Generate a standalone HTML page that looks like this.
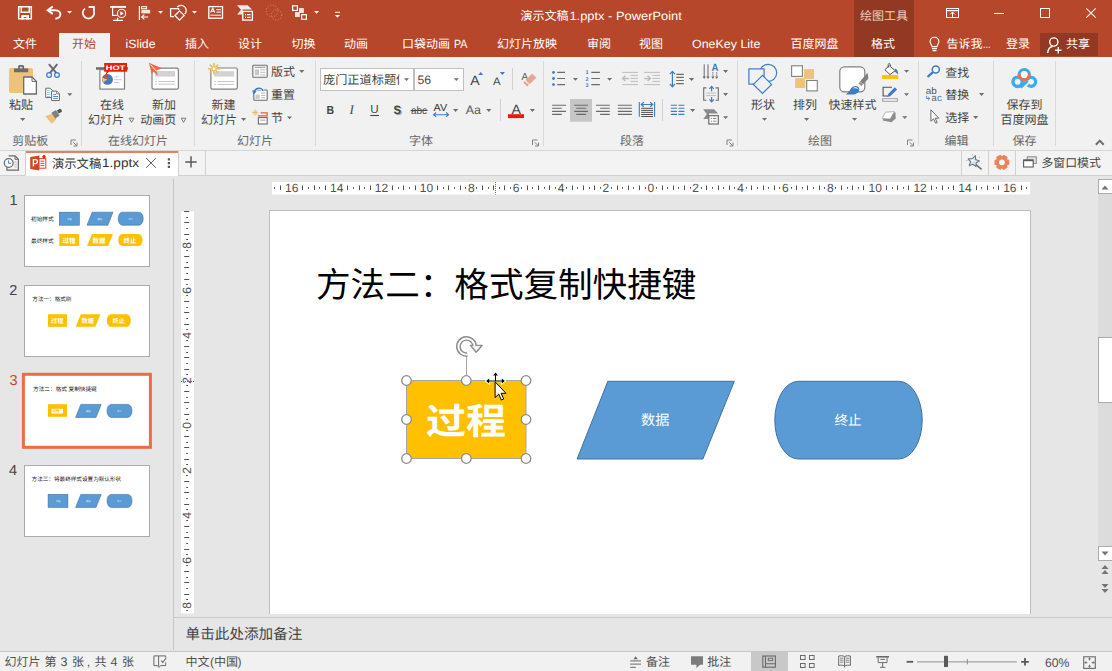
<!DOCTYPE html>
<html lang="zh-CN"><head><meta charset="utf-8"><title>演示文稿1.pptx - PowerPoint</title>
<style>
html,body{margin:0;padding:0;background:#E6E6E6;}
body{width:1112px;height:671px;overflow:hidden;font-family:"Liberation Sans","Noto Sans CJK SC",sans-serif;}
#app{position:relative;width:1112px;height:671px;overflow:hidden;}
#bg div{position:absolute;}
#ov{position:absolute;left:0;top:0;}
#ov text{font-family:"Liberation Sans","Noto Sans CJK SC",sans-serif;text-rendering:geometricPrecision;}
</style></head>
<body>
<div id="app">
<div id="bg">
<div style="left:0px;top:0px;width:1112px;height:57px;background:#B7472A;"></div>
<div style="left:854px;top:0px;width:60px;height:57px;background:#933923;"></div>
<div style="left:59px;top:33px;width:51px;height:24px;background:#F1F1F1;"></div>
<div style="left:1040px;top:33px;width:58px;height:23px;background:#933923;"></div>
<div style="left:0px;top:57px;width:1112px;height:93px;background:#F1F1F1;"></div>
<div style="left:0px;top:150px;width:1112px;height:1px;background:#D6D6D6;"></div>
<div style="left:0px;top:151px;width:1112px;height:25px;background:#F3F3F3;"></div>
<div style="left:0px;top:175px;width:1112px;height:1px;background:#D0D0D0;"></div>
<div style="left:26px;top:151px;width:152px;height:25px;background:#FFFFFF;"></div>
<div style="left:26px;top:151px;width:152px;height:2px;background:#E8825C;"></div>
<div style="left:25px;top:151px;width:1px;height:24px;background:#D0D0D0;"></div>
<div style="left:178px;top:151px;width:1px;height:24px;background:#D0D0D0;"></div>
<div style="left:205px;top:151px;width:1px;height:24px;background:#D0D0D0;"></div>
<div style="left:961px;top:151px;width:1px;height:24px;background:#D0D0D0;"></div>
<div style="left:988px;top:151px;width:1px;height:24px;background:#D0D0D0;"></div>
<div style="left:1015px;top:151px;width:1px;height:24px;background:#D0D0D0;"></div>
<div style="left:0px;top:176px;width:1112px;height:475px;background:#E6E6E6;"></div>
<div style="left:173px;top:179px;width:1px;height:471px;background:#C6C6C6;"></div>
<div style="left:81px;top:61px;width:1px;height:85px;background:#D9D9D9;"></div>
<div style="left:194px;top:61px;width:1px;height:85px;background:#D9D9D9;"></div>
<div style="left:315px;top:61px;width:1px;height:85px;background:#D9D9D9;"></div>
<div style="left:543px;top:61px;width:1px;height:85px;background:#D9D9D9;"></div>
<div style="left:737px;top:61px;width:1px;height:85px;background:#D9D9D9;"></div>
<div style="left:918px;top:61px;width:1px;height:85px;background:#D9D9D9;"></div>
<div style="left:993px;top:61px;width:1px;height:85px;background:#D9D9D9;"></div>
<div style="left:1055px;top:61px;width:1px;height:85px;background:#D9D9D9;"></div>
<div style="left:512px;top:68px;width:1px;height:22px;background:#D0D0D0;"></div>
<div style="left:500px;top:99px;width:1px;height:22px;background:#D0D0D0;"></div>
<div style="left:662px;top:99px;width:1px;height:22px;background:#D0D0D0;"></div>
<div style="left:0px;top:651px;width:1112px;height:1px;background:#C6C6C6;"></div>
<div style="left:0px;top:652px;width:1112px;height:19px;background:#F1F1F1;"></div>
<div style="left:750.5px;top:652px;width:37.4px;height:19px;background:#C8C8C8;"></div>
<div style="left:174px;top:614px;width:938px;height:3.5px;background:#E6E6E6;"></div>
<div style="left:174px;top:617px;width:938px;height:1px;background:#C8C8C8;"></div>
<div style="left:174px;top:618px;width:938px;height:32px;background:#E6E6E6;"></div>
<div style="left:1098px;top:194px;width:14px;height:353px;background:#DCDCDC;"></div>
</div>
<svg id="ov" width="1112" height="671" viewBox="0 0 1112 671">
<rect x="24.5" y="195.5" width="125" height="71" fill="#fff" stroke="#ABABAB" stroke-width="1"/>
<text x="31" y="221" font-size="5.7" fill="#222">初始样式</text>
<text x="31" y="242.9" font-size="5.7" fill="#222">最终样式</text>
<rect x="59.3" y="212.2" width="20" height="13" fill="#5B9BD5" stroke="#41719C" stroke-width="0.6"/>
<path d="M92.2 212.2L113 212.2L107.8 225.2L87 225.2Z" fill="#5B9BD5" stroke="#41719C" stroke-width="0.6"/>
<path d="M122.4 212.2L139 212.2A4.2 6.5 0 0 1 139 225.2L122.4 225.2A4.2 6.5 0 0 1 122.4 212.2Z" fill="#5B9BD5" stroke="#41719C" stroke-width="0.6"/>
<text x="67" y="219.5" font-size="2.3" fill="#fff" opacity="0.8">过程</text>
<text x="97.5" y="219.5" font-size="2.3" fill="#fff" opacity="0.8">数据</text>
<text x="128.5" y="219.5" font-size="2.3" fill="#fff" opacity="0.8">终止</text>
<rect x="59.3" y="234" width="19.7" height="12" fill="#FFC000"/>
<path d="M92 234L113 234L108 246L87 246Z" fill="#FFC000"/>
<path d="M122.4 234L138.4 234A4.2 6 0 0 1 138.4 246L122.4 246A4.2 6 0 0 1 122.4 234Z" fill="#FFC000"/>
<text x="62.5" y="242.6" font-size="6.5" font-weight="bold" fill="#fff">过程</text>
<text x="92.5" y="242.6" font-size="6.5" font-weight="bold" fill="#fff">数据</text>
<text x="123.5" y="242.6" font-size="6.5" font-weight="bold" fill="#fff">终止</text>
<rect x="24.5" y="285.5" width="125" height="71" fill="#fff" stroke="#ABABAB" stroke-width="1"/>
<text x="32.3" y="300.7" font-size="5.6" fill="#222">方法一：格式刷</text>
<rect x="47.9" y="314.2" width="19.1" height="12.6" fill="#FFC000"/>
<path d="M80.8 314.2L100.4 314.2L95.4 326.8L75.8 326.8Z" fill="#FFC000"/>
<path d="M111 314.2L126.6 314.2A4.2 6.3 0 0 1 126.6 326.8L111 326.8A4.2 6.3 0 0 1 111 314.2Z" fill="#FFC000"/>
<text x="51" y="323.2" font-size="6.2" font-weight="bold" fill="#fff">过程</text>
<text x="81.5" y="323.2" font-size="6.2" font-weight="bold" fill="#fff">数据</text>
<text x="112.5" y="323.2" font-size="6.2" font-weight="bold" fill="#fff">终止</text>
<rect x="23.4" y="374.3" width="127" height="73" fill="#fff" stroke="#EE6B48" stroke-width="3"/>
<text x="33.1" y="390.7" font-size="5.65" fill="#222">方法二：格式 复制快捷键</text>
<rect x="47.9" y="404.2" width="19.1" height="12.6" fill="#FFC000"/>
<rect x="51.5" y="408.8" width="11.5" height="4.7" fill="#fff"/>
<text x="52.5" y="412.2" font-size="3.5" font-weight="bold" fill="#FFC000">过程</text>
<path d="M80.8 404.4L101.2 404.4L96 417.4L75.6 417.4Z" fill="#5B9BD5" stroke="#41719C" stroke-width="0.6"/>
<path d="M111.2 404.4L127.8 404.4A4.2 6.5 0 0 1 127.8 417.4L111.2 417.4A4.2 6.5 0 0 1 111.2 404.4Z" fill="#5B9BD5" stroke="#41719C" stroke-width="0.6"/>
<text x="86" y="411.7" font-size="2.3" fill="#fff" opacity="0.8">数据</text>
<text x="117.3" y="411.7" font-size="2.3" fill="#fff" opacity="0.8">终止</text>
<rect x="24.5" y="465.5" width="125" height="71" fill="#fff" stroke="#ABABAB" stroke-width="1"/>
<text x="31.6" y="480.7" font-size="5.6" fill="#222">方法三：将最终样式设置为默认形状</text>
<rect x="48.1" y="494.4" width="19.8" height="13" fill="#5B9BD5" stroke="#41719C" stroke-width="0.6"/>
<path d="M80.8 494.4L101.2 494.4L96 507.4L75.6 507.4Z" fill="#5B9BD5" stroke="#41719C" stroke-width="0.6"/>
<path d="M111.2 494.4L127.8 494.4A4.2 6.5 0 0 1 127.8 507.4L111.2 507.4A4.2 6.5 0 0 1 111.2 494.4Z" fill="#5B9BD5" stroke="#41719C" stroke-width="0.6"/>
<text x="55.8" y="501.7" font-size="2.3" fill="#fff" opacity="0.8">过程</text>
<text x="86" y="501.7" font-size="2.3" fill="#fff" opacity="0.8">数据</text>
<text x="117.3" y="501.7" font-size="2.3" fill="#fff" opacity="0.8">终止</text>
<rect x="270" y="211" width="760" height="403" fill="#fff"/>
<path d="M269.5 614V210.5H1030.5V614" fill="none" stroke="#BDBDBD" stroke-width="1"/>
<rect x="272" y="182" width="758" height="12.5" fill="#fff"/>
<rect x="181" y="211.5" width="13" height="402" fill="#fff"/>
<path d="M274.5 187v1.8M280.5 185.5v4.6M302.5 185.5v4.6M308.5 187v1.8M314.5 185.5v4.6M319.5 187v1.8M325.5 185.5v4.6M347.5 185.5v4.6M353.5 187v1.8M359.5 185.5v4.6M364.5 187v1.8M370.5 185.5v4.6M392.5 185.5v4.6M398.5 187v1.8M403.5 185.5v4.6M409.5 187v1.8M415.5 185.5v4.6M437.5 185.5v4.6M443.5 187v1.8M448.5 185.5v4.6M454.5 187v1.8M460.5 185.5v4.6M465.5 187v1.8M476.5 187v1.8M482.5 185.5v4.6M488.5 187v1.8M493.5 185.5v4.6M499.5 187v1.8M504.5 185.5v4.6M510.5 187v1.8M521.5 187v1.8M527.5 185.5v4.6M532.5 187v1.8M538.5 185.5v4.6M544.5 187v1.8M549.5 185.5v4.6M555.5 187v1.8M566.5 187v1.8M572.5 185.5v4.6M577.5 187v1.8M583.5 185.5v4.6M589.5 187v1.8M594.5 185.5v4.6M600.5 187v1.8M611.5 187v1.8M617.5 185.5v4.6M622.5 187v1.8M628.5 185.5v4.6M633.5 187v1.8M639.5 185.5v4.6M645.5 187v1.8M656.5 187v1.8M662.5 185.5v4.6M667.5 187v1.8M673.5 185.5v4.6M678.5 187v1.8M684.5 185.5v4.6M690.5 187v1.8M701.5 187v1.8M706.5 185.5v4.6M712.5 187v1.8M718.5 185.5v4.6M723.5 187v1.8M729.5 185.5v4.6M734.5 187v1.8M746.5 187v1.8M751.5 185.5v4.6M757.5 187v1.8M763.5 185.5v4.6M768.5 187v1.8M774.5 185.5v4.6M779.5 187v1.8M791.5 187v1.8M796.5 185.5v4.6M802.5 187v1.8M807.5 185.5v4.6M813.5 187v1.8M819.5 185.5v4.6M824.5 187v1.8M835.5 187v1.8M841.5 185.5v4.6M847.5 187v1.8M852.5 185.5v4.6M858.5 187v1.8M863.5 185.5v4.6M886.5 185.5v4.6M892.5 187v1.8M897.5 185.5v4.6M903.5 187v1.8M908.5 185.5v4.6M931.5 185.5v4.6M936.5 187v1.8M942.5 185.5v4.6M948.5 187v1.8M953.5 185.5v4.6M976.5 185.5v4.6M981.5 187v1.8M987.5 185.5v4.6M993.5 187v1.8M998.5 185.5v4.6M1021.5 185.5v4.6M1026.5 187v1.8" stroke="#505050" stroke-width="1" fill="none"/>
<text x="291.76" y="192" font-size="12" fill="#505050" text-anchor="middle">16</text>
<text x="336.64" y="192" font-size="12" fill="#505050" text-anchor="middle">14</text>
<text x="381.52" y="192" font-size="12" fill="#505050" text-anchor="middle">12</text>
<text x="426.4" y="192" font-size="12" fill="#505050" text-anchor="middle">10</text>
<text x="471.28" y="192" font-size="12" fill="#505050" text-anchor="middle">8</text>
<text x="516.16" y="192" font-size="12" fill="#505050" text-anchor="middle">6</text>
<text x="561.04" y="192" font-size="12" fill="#505050" text-anchor="middle">4</text>
<text x="605.92" y="192" font-size="12" fill="#505050" text-anchor="middle">2</text>
<text x="650.8" y="192" font-size="12" fill="#505050" text-anchor="middle">0</text>
<text x="695.68" y="192" font-size="12" fill="#505050" text-anchor="middle">2</text>
<text x="740.56" y="192" font-size="12" fill="#505050" text-anchor="middle">4</text>
<text x="785.44" y="192" font-size="12" fill="#505050" text-anchor="middle">6</text>
<text x="830.32" y="192" font-size="12" fill="#505050" text-anchor="middle">8</text>
<text x="875.2" y="192" font-size="12" fill="#505050" text-anchor="middle">10</text>
<text x="920.08" y="192" font-size="12" fill="#505050" text-anchor="middle">12</text>
<text x="964.96" y="192" font-size="12" fill="#505050" text-anchor="middle">14</text>
<text x="1009.84" y="192" font-size="12" fill="#505050" text-anchor="middle">16</text>
<path d="M184.2 211.5h5M186.2 217.5h1.8M184.2 222.5h5M186.2 228.5h1.8M184.2 234.5h5M186.2 239.5h1.8M186.2 250.5h1.8M184.2 256.5h5M186.2 262.5h1.8M184.2 267.5h5M186.2 273.5h1.8M184.2 279.5h5M186.2 284.5h1.8M186.2 295.5h1.8M184.2 301.5h5M186.2 307.5h1.8M184.2 312.5h5M186.2 318.5h1.8M184.2 324.5h5M186.2 329.5h1.8M186.2 340.5h1.8M184.2 346.5h5M186.2 352.5h1.8M184.2 357.5h5M186.2 363.5h1.8M184.2 369.5h5M186.2 374.5h1.8M186.2 385.5h1.8M184.2 391.5h5M186.2 397.5h1.8M184.2 402.5h5M186.2 408.5h1.8M184.2 414.5h5M186.2 419.5h1.8M186.2 430.5h1.8M184.2 436.5h5M186.2 442.5h1.8M184.2 447.5h5M186.2 453.5h1.8M184.2 459.5h5M186.2 464.5h1.8M186.2 475.5h1.8M184.2 481.5h5M186.2 487.5h1.8M184.2 492.5h5M186.2 498.5h1.8M184.2 504.5h5M186.2 509.5h1.8M186.2 520.5h1.8M184.2 526.5h5M186.2 532.5h1.8M184.2 537.5h5M186.2 543.5h1.8M184.2 549.5h5M186.2 554.5h1.8M186.2 565.5h1.8M184.2 571.5h5M186.2 577.5h1.8M184.2 582.5h5M186.2 588.5h1.8M184.2 594.5h5M186.2 599.5h1.8M186.2 610.5h1.8" stroke="#505050" stroke-width="1" fill="none"/>
<text transform="translate(191 245.3) rotate(-90)" font-size="12" fill="#505050" text-anchor="middle">8</text>
<text transform="translate(191 290.3) rotate(-90)" font-size="12" fill="#505050" text-anchor="middle">6</text>
<text transform="translate(191 335.3) rotate(-90)" font-size="12" fill="#505050" text-anchor="middle">4</text>
<text transform="translate(191 380.3) rotate(-90)" font-size="12" fill="#505050" text-anchor="middle">2</text>
<text transform="translate(191 425.3) rotate(-90)" font-size="12" fill="#505050" text-anchor="middle">0</text>
<text transform="translate(191 470.3) rotate(-90)" font-size="12" fill="#505050" text-anchor="middle">2</text>
<text transform="translate(191 515.3) rotate(-90)" font-size="12" fill="#505050" text-anchor="middle">4</text>
<text transform="translate(191 560.3) rotate(-90)" font-size="12" fill="#505050" text-anchor="middle">6</text>
<text transform="translate(191 605.3) rotate(-90)" font-size="12" fill="#505050" text-anchor="middle">8</text>
<text x="316" y="296.5" font-size="34.6" fill="#000">方法二：格式复制快捷键</text>
<path d="M607.8 381.3L734.3 381.3L702.9 459L577.1 459Z" fill="#5B9BD5" stroke="#41719C" stroke-width="1"/>
<text x="641" y="425" font-size="14.2" fill="#fff">数据</text>
<path d="M798.3 381.3L898.7 381.3A23.5 38.85 0 0 1 898.7 459L798.3 459A23.5 38.85 0 0 1 798.3 381.3Z" fill="#5B9BD5" stroke="#41719C" stroke-width="1"/>
<text x="834.4" y="425" font-size="13.5" fill="#fff">终止</text>
<rect x="406.5" y="380.5" width="119.5" height="78" fill="#FFC000"/>
<text x="426" y="433.5" font-size="36" font-weight="bold" fill="#fff" textLength="80" lengthAdjust="spacingAndGlyphs">过程</text>
<rect x="406.5" y="380.5" width="119.5" height="78" fill="none" stroke="#A6A6A6" stroke-width="1"/>
<path d="M466.5 357V376" stroke="#A6A6A6" stroke-width="1"/>
<circle cx="406.5" cy="380.5" r="4.8" fill="#fff" stroke="#8C8C8C" stroke-width="1.3"/>
<circle cx="406.5" cy="419.5" r="4.8" fill="#fff" stroke="#8C8C8C" stroke-width="1.3"/>
<circle cx="406.5" cy="458.5" r="4.8" fill="#fff" stroke="#8C8C8C" stroke-width="1.3"/>
<circle cx="466.3" cy="380.5" r="4.8" fill="#fff" stroke="#8C8C8C" stroke-width="1.3"/>
<circle cx="466.3" cy="458.5" r="4.8" fill="#fff" stroke="#8C8C8C" stroke-width="1.3"/>
<circle cx="526" cy="380.5" r="4.8" fill="#fff" stroke="#8C8C8C" stroke-width="1.3"/>
<circle cx="526" cy="419.5" r="4.8" fill="#fff" stroke="#8C8C8C" stroke-width="1.3"/>
<circle cx="526" cy="458.5" r="4.8" fill="#fff" stroke="#8C8C8C" stroke-width="1.3"/>
<g fill="none" stroke-linejoin="round"><path d="M467.3 354.6A8.1 8.1 0 1 1 474.6 346.3" stroke="#8C8C8C" stroke-width="4.8"/><path d="M470.4 345.4H482.2L476.2 352.2Z" fill="#8C8C8C" stroke="#8C8C8C" stroke-width="1.4"/><path d="M467.3 354.6A8.1 8.1 0 1 1 474.6 346.6" stroke="#fff" stroke-width="1.9"/><path d="M472.3 346.3H480.2L476.2 350.8Z" fill="#fff" stroke="#fff" stroke-width="0.4"/></g>
<rect x="1098.5" y="179.5" width="14" height="14" fill="#fff" stroke="#ABABAB"/><path d="M1101.5 189.5h7l-3.5 -4z" fill="#747474"/><rect x="1098.5" y="337.5" width="14" height="65" fill="#fff" stroke="#ABABAB"/><rect x="1098.5" y="546.5" width="14" height="14" fill="#fff" stroke="#ABABAB"/><path d="M1101.5 551.5h7l-3.5 4z" fill="#747474"/><path d="M1101.5 569h7l-3.5 -4zM1101.5 574h7l-3.5 -4z" fill="#747474"/><path d="M1101.5 584h7l-3.5 4zM1101.5 589h7l-3.5 4z" fill="#747474"/>
<g stroke-linejoin="miter"><path d="M495.5 374.2V381M487.6 381H503.6" fill="none" stroke="#fff" stroke-width="2.6"/><path d="M495.5 372.2L498.6 376H492.4ZM485.6 381L489.4 377.9V384.1ZM505.4 381L501.6 377.9V384.1Z" fill="#fff" stroke="#fff" stroke-width="1.2"/><path d="M495.5 374.2V381M487.6 381H503.6" fill="none" stroke="#000" stroke-width="1"/><path d="M495.5 372.6L497.9 375.6H493.1ZM486.2 381L489.2 378.6V383.4ZM504.8 381L501.8 378.6V383.4Z" fill="#000"/><path d="M495.1 381.8V397.6L498.7 394.1L501.4 400L503.7 399L501.1 393.3H506Z" fill="#fff" stroke="#000" stroke-width="1"/></g>
<path d="M495.5 182V194.5" stroke="#D9482B" stroke-width="1" stroke-dasharray="1 1" fill="none"/><path d="M181 381.5H194" stroke="#D9482B" stroke-width="1" stroke-dasharray="1 1" fill="none"/>
<g id="qat"><path d="M18.7 6.7H31.3V18.8H18.7Z" fill="none" stroke="#fff" stroke-width="1.5"/><path d="M21.2 6.7V12.3H29.2V6.7" fill="none" stroke="#fff" stroke-width="1.4"/><path d="M21.3 15H29V19.4H26.2V17H23.8V19.4H21.3Z" fill="#fff"/><path d="M52.8 6.6L47.6 10.3L52.8 13.9M48 10.3H55.2C59 10.3 60.4 12.6 60.4 14.3C60.4 16.6 58.4 18.4 55.4 18.7" fill="none" stroke="#fff" stroke-width="1.9" stroke-linejoin="miter"/><path d="M67 11H72L69.5 13.8Z" fill="#fff"/><path d="M84.9 8.6A5.6 5.6 0 1 0 93.9 11.6" fill="none" stroke="#fff" stroke-width="1.8"/><path d="M88.6 7H93.9V11.8" fill="none" stroke="#fff" stroke-width="1.8"/><path d="M110 6.9H126" stroke="#fff" stroke-width="1.9" fill="none"/><path d="M112.6 7.5V15.4H117.2M118 17.8L117 20.2M113 20.3H123" stroke="#fff" stroke-width="1.2" fill="none"/><circle cx="121.6" cy="13.4" r="4.1" fill="none" stroke="#fff" stroke-width="1.1"/><path d="M120.3 11.2L123.9 13.4L120.3 15.6Z" fill="#fff"/><path d="M139.4 6V19.9" stroke="#fff" stroke-width="1.2" fill="none"/><rect x="141.6" y="6.7" width="5" height="2" fill="none" stroke="#fff" stroke-width="1"/><rect x="141.3" y="9.8" width="8.8" height="3.6" fill="#F6E4DE"/><path d="M141.6 17H148.2M144.3 14.6L141.7 17L144.3 19.4" stroke="#fff" stroke-width="1.2" fill="none"/><path d="M158 11H163L160.5 13.8Z" fill="#fff"/><path d="M178.6 9.9V8.6H170.6V16.7H174" fill="none" stroke="#fff" stroke-width="1.3"/><path d="M177.2 7.2A5.1 5.1 0 1 1 184.7 14.1" fill="none" stroke="#fff" stroke-width="1.2"/><path d="M179.5 10.9L184.2 15.4L179.5 20.1L174.9 15.5Z" fill="none" stroke="#fff" stroke-width="1.2"/><path d="M192 11H197L194.5 13.8Z" fill="#fff"/><rect x="208.8" y="6.6" width="13.7" height="11.6" fill="none" stroke="#fff" stroke-width="1.3"/><path d="M210.6 12.6L212.7 8.2L214.8 12.6M211.4 11.2H214" fill="none" stroke="#fff" stroke-width="1.1"/><path d="M216.3 9.7H221M216.3 12.1H221M210.3 15.2H221" stroke="#fff" stroke-width="1" fill="none"/><path d="M236.9 5.2H247.6L252 9.6H242.6V14.5H237.2L241 9.8Z" fill="#F4EAE6"/><rect x="242.8" y="11.4" width="9.6" height="8.7" fill="none" stroke="#fff" stroke-width="1.3"/><path d="M245 14.6H246.2M247 14.6H250.6M245 17.4H246.2M247 17.4H250.6" stroke="#fff" stroke-width="1.1" fill="none"/><circle cx="272" cy="10.9" r="5.9" fill="none" stroke="#D48D78" stroke-width="0.9" stroke-dasharray="1.2 1.6"/><circle cx="276.6" cy="14.9" r="5.2" fill="none" stroke="#D48D78" stroke-width="0.9" stroke-dasharray="1.2 1.6"/><rect x="292.6" y="5.8" width="4.8" height="4.6" fill="none" stroke="#fff" stroke-width="1.2"/><rect x="299" y="8.1" width="4.9" height="4.9" fill="#F6E4DE"/><rect x="295" y="12.1" width="4.9" height="4.9" fill="#F6E4DE"/><rect x="301.7" y="14.7" width="4.7" height="4.6" fill="none" stroke="#fff" stroke-width="1.2"/><path d="M314 11H319L316.5 13.8Z" fill="#fff"/><path d="M335 12.3H340" stroke="#fff" stroke-width="1" fill="none"/><path d="M335 15H340L337.5 17.8Z" fill="#fff"/><rect x="946.5" y="8.5" width="12" height="9" fill="none" stroke="#fff" stroke-width="1"/><path d="M946.5 10.6H958.5" fill="none" stroke="#fff" stroke-width="1.3"/><path d="M952.5 17V12.2M950.2 14.4L952.5 12L954.8 14.4" fill="none" stroke="#fff" stroke-width="1"/><path d="M994 13.5H1004" stroke="#fff" stroke-width="1" fill="none"/><rect x="1040.5" y="8.5" width="9" height="9" fill="none" stroke="#fff" stroke-width="1"/><path d="M1086.3 8.3L1095.7 17.7M1095.7 8.3L1086.3 17.7" stroke="#fff" stroke-width="1.1" fill="none"/><path d="M932 46.6C932 44.8 930.1 44 930.1 41.6A4.4 4.4 0 0 1 938.9 41.6C938.9 44 937 44.8 937 46.6Z" fill="none" stroke="#fff" stroke-width="1.1"/><path d="M932 48.6H937M932.6 50.6H936.4" stroke="#fff" stroke-width="1.1" fill="none"/><circle cx="1053.8" cy="42" r="4.1" fill="none" stroke="#fff" stroke-width="1.4"/><path d="M1047.7 53C1048 49.2 1050.2 46.9 1052.6 46.5" fill="none" stroke="#fff" stroke-width="1.4"/><path d="M1058.3 47V53.4M1055.1 50.2H1061.5" stroke="#fff" stroke-width="1.4" fill="none"/></g>
<g id="rb1"><rect x="9" y="68" width="24" height="25" rx="1.8" fill="#EDC27C"/><path d="M14 68.4H28.2V72.2H14ZM18.1 69V66.6Q18.1 65.1 19.6 65.1H22.6Q24.1 65.1 24.1 66.6V69Z" fill="#6B6B6B"/><rect x="19.9" y="66.8" width="2.4" height="1.6" fill="#E4E4E4"/><path d="M23.7 77H32L36.4 81.4V94H23.7Z" fill="#fff" stroke="#6B6B6B" stroke-width="1.3" stroke-linejoin="round"/><path d="M32 77V81.4H36.4" fill="none" stroke="#6B6B6B" stroke-width="1"/><path d="M20 118H25.4L22.7 121Z" fill="#6E6E6E"/><path d="M48.9 64.2L56.4 73.2M57.3 64.2L49.8 73.2" stroke="#6B6B6B" stroke-width="2" fill="none"/><circle cx="49.1" cy="75" r="2.4" fill="none" stroke="#3E7CC4" stroke-width="1.2"/><circle cx="57" cy="75" r="2.4" fill="none" stroke="#3E7CC4" stroke-width="1.2"/><path d="M45.7 88.2H50.2L52.4 90.4V97.6H45.7Z" fill="#fff" stroke="#6B6B6B" stroke-width="1"/><path d="M47 90.5H49.4M47 92.5H49.8M47 94.5H49.8M47 96.5H49.8" stroke="#7FA8DA" stroke-width="0.8"/><path d="M51.6 91.1H56.8L59.4 93.7V100.5H51.6Z" fill="#fff" stroke="#6B6B6B" stroke-width="1"/><path d="M56.6 91.3V93.9H59.2" fill="none" stroke="#6B6B6B" stroke-width="0.8"/><path d="M53.2 94.6H56M53.2 96.5H58M53.2 98.4H58" stroke="#3E7CC4" stroke-width="0.9"/><path d="M67.2 93.2H72.4L69.8 96.1Z" fill="#6E6E6E"/><path d="M45.2 116.3L52.4 113.6L56.2 119.4L51.8 123.8Z" fill="#EDC27C"/><path d="M51.4 112.8L56 109.9L59.6 115.5L55.3 118.7Z" fill="#808080"/><path d="M56.9 110.6L59.8 108.8Q60.6 108.4 61 109.2L61.9 110.7Q62.3 111.5 61.5 111.9L58.8 113.6Z" fill="#555"/><path d="M71 145V140H76" fill="none" stroke="#808080" stroke-width="1"/><path d="M73.3 142.3L76.5 145.5M77 142.5V146H73.5" fill="none" stroke="#808080" stroke-width="1"/><rect x="96" y="67.2" width="32" height="2.5" fill="#6B6B6B"/><rect x="99.9" y="69.7" width="24.6" height="19.4" fill="#fff" stroke="#808080" stroke-width="1.2"/><circle cx="107.5" cy="79.4" r="5.4" fill="#3E7CC4"/><path d="M107.5 79.4L103.1 82.5A5.4 5.4 0 0 1 102.4 77.6Z" fill="#EDC27C"/><path d="M107.5 79.4L102.4 77.6A5.4 5.4 0 0 1 108.6 74.1Z" fill="#B9583C"/><path d="M114.2 76.8H119M114.2 79.7H121.8M114.2 82.5H119" stroke="#C4C4C4" stroke-width="0.9"/><path d="M104.2 63H127V71.8H109L105.6 74.8L106.6 71.8H104.2Z" fill="#E71F0D"/><text x="105.8" y="69.8" font-size="6.5" fill="#fff" font-weight="bold" textLength="19.4" lengthAdjust="spacingAndGlyphs">HOT</text><path d="M129.2 118.2H133.9L131.55 122.4Z" fill="none" stroke="#6E6E6E" stroke-width="0.9"/><rect x="152" y="68.1" width="26.4" height="21" rx="1.6" fill="#fff" stroke="#808080" stroke-width="1.2"/><rect x="155.2" y="71" width="19.8" height="5.6" fill="#D2D2D2"/><path d="M155.2 81.5H156.8M158.3 81.5H175M155.2 84.2H156.8M158.3 84.2H175" stroke="#C0C0C0" stroke-width="0.9"/><path d="M148.9 62.7L162 68.3L156.6 70.4L157.8 75.8L153.6 71.8L151.6 73.8Z" fill="#EE6B48"/><path d="M150.6 64.6L156.6 71.4" stroke="#fff" stroke-width="0.9" fill="none"/><path d="M181.2 118.2H185.9L183.55 122.4Z" fill="none" stroke="#6E6E6E" stroke-width="0.9"/><rect x="210.9" y="68" width="26.4" height="21.2" rx="1.6" fill="#fff" stroke="#808080" stroke-width="1.2"/><rect x="214.2" y="71.2" width="20" height="5.4" fill="#D2D2D2"/><path d="M214.2 81.5H215.8M217.4 81.5H234.2M214.2 84.4H215.8M217.4 84.4H234.2" stroke="#C0C0C0" stroke-width="0.9"/><circle cx="214" cy="68.8" r="3.2" fill="#F1F1F1"/><path d="M214 62.8V74.8M208 68.8H220M209.8 64.6L218.2 73M218.2 64.6L209.8 73" stroke="#EDB866" stroke-width="1.5" fill="none"/><circle cx="214" cy="68.8" r="1.5" fill="#fff"/><path d="M241 118H246.2L243.6 120.9Z" fill="#6E6E6E"/><rect x="252.8" y="65.2" width="14.4" height="12" rx="0.8" fill="#fff" stroke="#6B6B6B" stroke-width="1.1"/><path d="M254.5 67.3H265.6" stroke="#808080" stroke-width="0.9"/><rect x="254.7" y="69.3" width="4.3" height="6" fill="#C8C8C8"/><path d="M260.4 69.8H265.4M260.4 72.3H265.4M260.4 74.9H265.4" stroke="#B0B0B0" stroke-width="0.9"/><path d="M299.2 70.1H304.4L301.8 73Z" fill="#6E6E6E"/><rect x="253.8" y="90" width="13.4" height="10.2" rx="0.8" fill="#fff" stroke="#6B6B6B" stroke-width="1.1"/><rect x="255.4" y="94.6" width="4.2" height="4.2" fill="#C8C8C8"/><path d="M261 93H265.4M261 95.4H265.4M261 97.8H265.4" stroke="#B0B0B0" stroke-width="0.9"/><path d="M254 92.6C254.6 89.4 257.6 87.6 260.4 88.4C261.8 88.8 262.6 89.6 263.2 90.6" fill="none" stroke="#F1F1F1" stroke-width="3.2"/><path d="M254 92.6C254.6 89.4 257.6 87.6 260.4 88.4C261.8 88.8 262.6 89.6 263.2 90.6" fill="none" stroke="#3E7CC4" stroke-width="1.5"/><path d="M252.2 90.2L256.8 91.4L253.4 94.6Z" fill="#3E7CC4"/><path d="M255.2 109.4V115.6M252.1 112.5H258.3M253 110.3L257.4 114.7M257.4 110.3L253 114.7" stroke="#EDB866" stroke-width="0.9" fill="none"/><path d="M260.6 112.8H267.2V115.8H258" fill="none" stroke="#EE5B3A" stroke-width="1.2"/><rect x="258.4" y="117.6" width="8.8" height="6.4" fill="#fff" stroke="#6B6B6B" stroke-width="1.1"/><path d="M260.2 120.2H265.6" stroke="#B0B0B0" stroke-width="1.2"/><path d="M287 116.4H292L289.5 119.2Z" fill="#6E6E6E"/></g>
<g id="rb2"><rect x="320.5" y="68.5" width="93" height="22" fill="#fff" stroke="#C0C0C0" stroke-width="1"/><rect x="414.5" y="68.5" width="49" height="22" fill="#fff" stroke="#C0C0C0" stroke-width="1"/><path d="M404 78.2H409L406.5 81Z" fill="#6E6E6E"/><path d="M453.8 78.2H458.9L456.35 81.05Z" fill="#6E6E6E"/><text x="470.2" y="84.9" font-size="13.6" fill="#444444" textLength="9.4" lengthAdjust="spacingAndGlyphs">A</text><path d="M478.2 75.1H483.2L480.7 71.9Z" fill="#3E7CC4"/><text x="493" y="84.9" font-size="10.8" fill="#444444" textLength="7.6" lengthAdjust="spacingAndGlyphs">A</text><path d="M499.8 71.9H505L502.4 75.1Z" fill="#3E7CC4"/><text x="521.6" y="79.8" font-size="10.2" fill="#5A5A5A" textLength="6.6" lengthAdjust="spacingAndGlyphs">A</text><path d="M525.9 80L532.1 73.9L536.2 77.6L529.6 84Z" fill="#E1A898" stroke="#E1A898" stroke-width="0.6" stroke-linejoin="round"/><path d="M523.2 82.5L524.7 80.9L529 85L527.2 86.5Z" fill="#E1A898"/><text x="326.6" y="113.8" font-size="11.8" fill="#444444" font-weight="bold" textLength="7.6" lengthAdjust="spacingAndGlyphs">B</text><text x="349.6" y="113.8" font-size="13" fill="#444444" font-style="italic" style="font-family:'Liberation Serif',serif">I</text><text x="370.3" y="113.4" font-size="11.6" fill="#444444">U</text><path d="M370.2 115.5H379" stroke="#444444" stroke-width="1.1"/><text x="394.8" y="115.2" font-size="12.2" fill="#ADADAD" font-weight="bold" textLength="7.6" lengthAdjust="spacingAndGlyphs">S</text><text x="393.5" y="113.9" font-size="12.2" fill="#444444" font-weight="bold" textLength="7.6" lengthAdjust="spacingAndGlyphs">S</text><text x="411" y="113.6" font-size="10.6" fill="#4A4A4A" textLength="16" lengthAdjust="spacingAndGlyphs">abc</text><path d="M410.6 110.5H427.6" stroke="#4A4A4A" stroke-width="1"/><text x="433.6" y="110.7" font-size="10.2" fill="#333" textLength="13.6" lengthAdjust="spacingAndGlyphs">AV</text><path d="M433.6 114.7H448.6M436.2 112.5L433.6 114.7L436.2 116.9M446 112.5L448.6 114.7L446 116.9" fill="none" stroke="#3E7CC4" stroke-width="1.1"/><path d="M453 109H458.2L455.6 111.9Z" fill="#6E6E6E"/><text x="465.8" y="114" font-size="12.2" fill="#5A5A5A" textLength="15.2" lengthAdjust="spacingAndGlyphs">Aa</text><path d="M486.2 109H491.4L488.8 111.9Z" fill="#6E6E6E"/><text x="511.6" y="114" font-size="13.4" fill="#444444" textLength="9.4" lengthAdjust="spacingAndGlyphs">A</text><rect x="508" y="114.2" width="16" height="3.9" fill="#E81A0C"/><path d="M529.8 109H535L532.4 111.9Z" fill="#6E6E6E"/><path d="M532.5 145V140H537.5" fill="none" stroke="#808080" stroke-width="1"/><path d="M534.8 142.3L538 145.5M538.5 142.5V146H535" fill="none" stroke="#808080" stroke-width="1"/><circle cx="553.5" cy="72.4" r="1.4" fill="#3E7CC4"/><circle cx="553.5" cy="78.5" r="1.4" fill="#3E7CC4"/><circle cx="553.5" cy="84.6" r="1.4" fill="#3E7CC4"/><path d="M557.2 72.4H565M557.2 78.5H565M557.2 84.6H565" stroke="#6B6B6B" stroke-width="1.1"/><path d="M572.9 77.9H578L575.45 80.75Z" fill="#6E6E6E"/><text x="585.6" y="74.4" font-size="5.4" fill="#3E7CC4" font-weight="bold">1</text><text x="585.6" y="80.5" font-size="5.4" fill="#3E7CC4" font-weight="bold">2</text><text x="585.6" y="86.6" font-size="5.4" fill="#3E7CC4" font-weight="bold">3</text><path d="M591.3 72.4H599.9M591.3 78.5H599.9M591.3 84.6H599.9" stroke="#6B6B6B" stroke-width="1.1"/><path d="M607.1 77.9H612.1L609.6 80.7Z" fill="#6E6E6E"/><path d="M622.2 72.4H638M630.3 75.4H638M630.3 78.4H638M630.3 81.4H638M622.2 84.6H638" stroke="#BDBDBD" stroke-width="1"/><path d="M622.6 78.4H628.8M625.4 75.8L622.6 78.4L625.4 81" fill="none" stroke="#BDBDBD" stroke-width="1.5"/><path d="M644.1 72.4H660M652.4 75.4H660M652.4 78.4H660M652.4 81.4H660M644.1 84.6H660" stroke="#BDBDBD" stroke-width="1"/><path d="M644.2 78.4H650.4M647.6 75.8L650.4 78.4L647.6 81" fill="none" stroke="#BDBDBD" stroke-width="1.5"/><path d="M672.4 71.6V86.6M669.9 74.2L672.4 71.4L674.9 74.2M669.9 84L672.4 86.8L674.9 84" fill="none" stroke="#3E7CC4" stroke-width="1.2"/><path d="M676.2 74.4H683.8M676.2 77.4H683.8M676.2 80.5H683.8M676.2 83.6H683.8" stroke="#6B6B6B" stroke-width="1.1"/><path d="M688.9 78H694.2L691.55 80.95Z" fill="#6E6E6E"/><path d="M704.2 64.3V77.5M708 64.3V77.5" stroke="#6B6B6B" stroke-width="1"/><path d="M712.9 72.2V77.5M716.7 72.2V77.5" stroke="#6B6B6B" stroke-width="1" stroke-dasharray="1.4 0.8"/><path d="M702.6 76.4H705.8L704.2 78.9ZM706.4 76.4H709.6L708 78.9ZM711.3 76.4H714.5L712.9 78.9ZM715.1 76.4H718.3L716.7 78.9Z" fill="#6B6B6B"/><text x="711.4" y="70.8" font-size="10.4" fill="#3E7CC4" font-weight="bold" textLength="7" lengthAdjust="spacingAndGlyphs">A</text><path d="M723.1 70.1H728.1L725.6 72.9Z" fill="#6E6E6E"/><path d="M706.4 87.9H703.7V100.2H706.4M715.6 87.9H718.3V100.2H715.6" fill="none" stroke="#6B6B6B" stroke-width="1.1"/><path d="M706.2 93.1H716M706.2 95.6H716" stroke="#B8B8B8" stroke-width="0.9"/><path d="M711.6 91.6V86.6M709.4 88.8L711.6 86.4L713.8 88.8M711.6 97V101.6M709.4 99.4L711.6 101.8L713.8 99.4" fill="none" stroke="#3E7CC4" stroke-width="1.2"/><path d="M723.1 93.1H728.1L725.6 95.9Z" fill="#6E6E6E"/><path d="M703 109.3H714L718.2 113.5H709V119H703.3L706.8 114Z" fill="#8A8A8A"/><rect x="708.8" y="115.7" width="9.5" height="8.3" fill="#fff" stroke="#6B6B6B" stroke-width="1.2"/><path d="M710.8 118.5H712M713 118.5H716.4M710.8 121.2H712M713 121.2H716.4" stroke="#8A8A8A" stroke-width="1"/><path d="M723.1 116.3H728.1L725.6 119.1Z" fill="#6E6E6E"/><rect x="570" y="99" width="22" height="22.7" fill="#C6C6C6"/><path d="M552.1 105.3H566M552.1 108.3H561.8M552.1 111.4H566M552.1 114.4H561.8" stroke="#6B6B6B" stroke-width="1.1"/><path d="M574.2 105.3H588M576.2 108.3H586.1M574.2 111.4H588M576.2 114.4H586.1" stroke="#6B6B6B" stroke-width="1.1"/><path d="M596 105.3H609.8M600.1 108.3H609.8M596 111.4H609.8M600.1 114.4H609.8" stroke="#6B6B6B" stroke-width="1.1"/><path d="M617.9 105.3H631.9M617.9 108.3H631.9M617.9 111.4H631.9M617.9 114.4H631.9" stroke="#6B6B6B" stroke-width="1.1"/><path d="M639.3 102.1V116.8M654.6 102.1V116.8" stroke="#3E7CC4" stroke-width="1.1"/><path d="M641.4 104.5H652.6M643.8 102.3L641.3 104.5L643.8 106.7M650.2 102.3L652.7 104.5L650.2 106.7" fill="none" stroke="#3E7CC4" stroke-width="1.2"/><path d="M641.2 108.3H653M641.2 110.4H653M641.2 112.4H653M641.2 114.5H653M641.2 116.5H653" stroke="#505050" stroke-width="1"/><path d="M670.8 105.3H677M678.4 105.3H684.4M670.8 108.3H677M678.4 108.3H684.4M670.8 111.4H677M678.4 111.4H684.4M670.8 114.4H677M678.4 114.4H684.4" stroke="#3E7CC4" stroke-width="1.1"/><path d="M690 109H695.2L692.6 111.9Z" fill="#6E6E6E"/><path d="M727 145V140H732" fill="none" stroke="#808080" stroke-width="1"/><path d="M729.3 142.3L732.5 145.5M733 142.5V146H729.5" fill="none" stroke="#808080" stroke-width="1"/><circle cx="768.2" cy="72.8" r="8.5" fill="none" stroke="#3E7CC4" stroke-width="1.2"/><rect x="748.9" y="68.9" width="15.2" height="15.2" fill="#F1F1F1" stroke="#3E7CC4" stroke-width="1.2"/><path d="M762.5 75.4L771.6 84.4L762.5 93.5L753.4 84.4Z" fill="#F1F1F1" stroke="#3E7CC4" stroke-width="1.2"/><path d="M762 118H767L764.5 120.8Z" fill="#6E6E6E"/><rect x="804" y="69.1" width="10" height="9.8" fill="#EDC27C"/><rect x="795.1" y="78.1" width="10.1" height="9.9" fill="#EDC27C"/><rect x="791.6" y="65.8" width="10.8" height="10.6" fill="#fff" stroke="#808080" stroke-width="1.1"/><rect x="806.7" y="80.5" width="10.6" height="10.4" fill="#fff" stroke="#808080" stroke-width="1.1"/><path d="M804 118H809.2L806.6 120.9Z" fill="#6E6E6E"/><rect x="839.8" y="66.8" width="25" height="25" rx="4.6" fill="#fff" stroke="#808080" stroke-width="1.2"/><path d="M867.6 72.8L868.4 78.4L863.2 84.2L860 81.6Z" fill="#808080"/><path d="M860 81.6L863.2 84.2L861.4 86.2L858.4 83.6Z" fill="#9A9A9A"/><path d="M845.6 94.4C849.6 92.2 850.4 88.2 853.2 86.6C855.6 85.4 858.4 86.2 859.2 88.4C860 91.2 857.6 93.8 853.6 94.4Z" fill="#3E7CC4"/><path d="M853.6 88.2C855.2 87.2 857 87.6 857.6 88.8" fill="none" stroke="#fff" stroke-width="1"/><path d="M852 118H857.1L854.55 120.85Z" fill="#6E6E6E"/><path d="M889.2 65.6L895.2 70.6L890 74.6L884.9 69.8Z" fill="#fff" stroke="#505050" stroke-width="1"/><path d="M888.2 67.8V64.4Q888.2 63.6 889.2 63.6Q890.4 63.6 890.4 64.6V66.4" fill="none" stroke="#505050" stroke-width="0.9"/><path d="M895.4 68.4C897.2 69.4 898.4 71.4 898 74.4C896.6 73 895.4 72 894.4 71.8Z" fill="#3E7CC4"/><rect x="882" y="75.1" width="16.2" height="3.8" fill="#FFC000"/><path d="M904 70H909.1L906.55 72.85Z" fill="#6E6E6E"/><path d="M892 87.2H883.1V96H888" fill="none" stroke="#505050" stroke-width="1.1"/><path d="M894.8 87.2L897.2 89.6L890.2 96.2L887.2 97L888.2 94Z" fill="#3E7CC4"/><rect x="882.7" y="98.8" width="14.6" height="2.4" fill="#fff" stroke="#8E8E8E" stroke-width="0.9"/><path d="M904 93.2H909.1L906.55 96.05Z" fill="#6E6E6E"/><path d="M885.6 113.6L895.4 112.2L895.8 118.4L891.4 122.2L882.6 120.4Z" fill="#8C8C8C"/><path d="M885.4 112.2L894.4 111.6L890.2 119L882.2 118.6Z" fill="#fff" stroke="#9A9A9A" stroke-width="0.7"/><path d="M902.2 116.2H907.3L904.75 119.05Z" fill="#6E6E6E"/><path d="M907.5 145V140H912.5" fill="none" stroke="#808080" stroke-width="1"/><path d="M909.8 142.3L913 145.5M913.5 142.5V146H910" fill="none" stroke="#808080" stroke-width="1"/><path d="M933 72.2L928.2 76.4" stroke="#3E7CC4" stroke-width="2.2" stroke-linecap="round"/><circle cx="935.8" cy="69.5" r="3.5" fill="#fff" stroke="#3E7CC4" stroke-width="1.6"/><text x="925.8" y="93.8" font-size="9.6" fill="#5A5A5A" textLength="11" lengthAdjust="spacingAndGlyphs">ab</text><text x="931.4" y="100.8" font-size="9.6" fill="#5A5A5A" textLength="5.2" lengthAdjust="spacingAndGlyphs">a</text><text x="937" y="100.8" font-size="9.6" fill="#3E7CC4" textLength="5" lengthAdjust="spacingAndGlyphs">c</text><path d="M926.6 95.8V98.6H929.6M928.2 97L929.8 98.6L928.2 100.2" fill="none" stroke="#3E7CC4" stroke-width="0.9"/><path d="M979 93.1H984.2L981.6 96Z" fill="#6E6E6E"/><path d="M930.9 109.8V121.2L933.6 118.8L935.6 123.2L937.2 122.5L935.2 118.2H938.8Z" fill="#fff" stroke="#6A6A6A" stroke-width="1"/><path d="M973.1 116H978.3L975.7 118.9Z" fill="#6E6E6E"/><circle cx="1017.6" cy="81.8" r="4.65" fill="none" stroke="#3EAAEE" stroke-width="3.4"/><path d="M1026.97 80.26A4.5 4.5 0 1 1 1028 85" fill="none" stroke="#3EAAEE" stroke-width="3.2"/><path d="M1020.5 87.4L1027.4 80.6" fill="none" stroke="#3EAAEE" stroke-width="3.4"/><circle cx="1024.26" cy="74.63" r="5.1" fill="#FCFCFC" stroke="#3EAAEE" stroke-width="3.1"/><path d="M1019.24 73.74A5.1 5.1 0 1 0 1029.28 73.74" fill="none" stroke="#F26B4A" stroke-width="2.7"/><path d="M1095.9 144.8L1099.8 140.6L1103.7 144.8" fill="none" stroke="#6E6E6E" stroke-width="2"/></g>
<clipPath id="fnc"><rect x="321" y="69" width="78.4" height="21"/></clipPath><g clip-path="url(#fnc)">
<text x="323" y="84.3" font-size="12.2" fill="#444444">庞门正道标题体</text>
</g>
<g id="misc"><path d="M8.6 155.9H15L18.4 159.3V170.2H6.9V166.6" fill="#F3F3F3" stroke="#6A6A6A" stroke-width="1.2"/><path d="M15 155.9V159.3H18.4" fill="none" stroke="#6A6A6A" stroke-width="1"/><path d="M14.4 162H16.8M14.4 164.4H16.8M14.4 166.8H16.8" stroke="#B4B4B4" stroke-width="0.9"/><circle cx="8.7" cy="163" r="4.4" fill="#fff" stroke="#6A6A6A" stroke-width="1.2"/><path d="M8.6 160.4V163.3H11" stroke="#3E7CC4" stroke-width="1" fill="none"/><rect x="38.8" y="158.6" width="7" height="9.6" fill="#fff" stroke="#D24625" stroke-width="1"/><path d="M40.4 161.2H44.4M40.4 163.4H44.4M40.4 165.6H44.4" stroke="#D24625" stroke-width="1"/><path d="M30.2 157.1L39.4 155.4V170.6L30.2 168.9Z" fill="#D24625"/><path d="M33.4 166.6V159.6H35.6Q37.4 159.6 37.4 161.6Q37.4 163.6 35.6 163.6H33.6" fill="none" stroke="#fff" stroke-width="1.4"/><circle cx="44" cy="156.8" r="1.7" fill="#E8200C"/><path d="M146.2 158.1L155.8 167.7M155.8 158.1L146.2 167.7" stroke="#5A5A5A" stroke-width="1" fill="none"/><path d="M167.8 158.2h2.2v2.2h-2.2zM167.8 162h2.2v2.2h-2.2zM167.8 165.8h2.2v2.2h-2.2z" fill="#5A5A5A"/><path d="M185.3 161.9H196.7M191 156.2V167.6" stroke="#5A5A5A" stroke-width="1.5" fill="none"/><path d="M975.2 164L981.6 169.4" stroke="#6E6E6E" stroke-width="1.6" fill="none"/><path d="M975.4 155.6L975.6 159.4L979.4 161L976.2 162.8L976 166.6L973 164.2L969.2 165.4L970.6 161.8L968.2 158.8L972.2 158.8Z" fill="#D4E6F5" stroke="#6F7A86" stroke-width="1.1" stroke-linejoin="round"/><circle cx="972.6" cy="160.6" r="1.1" fill="#fff"/><path d="M972.4 154.4V155.6M979 157.6L980 156.8M966.2 160.6H967.4M969.4 166.6L970.2 166" stroke="#9A9A9A" stroke-width="0.8"/><path d="M1008.7 160.4L1008.7 164.2L1006.8 164.7L1006.5 165.3L1007.0 167.3L1003.7 169.2L1002.2 167.8L1001.6 167.8L1000.1 169.2L996.8 167.3L997.3 165.3L997.0 164.7L995.1 164.2L995.1 160.4L997.0 159.9L997.3 159.3L996.8 157.3L1000.1 155.4L1001.6 156.8L1002.2 156.8L1003.7 155.4L1007.0 157.3L1006.5 159.3L1006.8 159.9Z" fill="#E8845A" stroke="#E8845A" stroke-width="1.2" stroke-linejoin="round"/><circle cx="1001.9" cy="162.3" r="2.9" fill="#F6F6F6"/><rect x="1027.3" y="156.8" width="9" height="6.6" fill="#E2E2E2" stroke="#8A8A8A" stroke-width="1"/><rect x="1023.6" y="160" width="9.6" height="7" fill="#fff" stroke="#5A5A5A" stroke-width="1.1"/><path d="M1023.6 160.4H1033.2" stroke="#5A5A5A" stroke-width="1.6"/><path d="M158.6 655.9H153.9V665.6H157.4L159 667.4L160.6 665.6H165.7V662.4M158.6 655.9V666M158.6 655.9H165.7V657.6" fill="none" stroke="#6A6A6A" stroke-width="1"/><path d="M161.2 660.6L162.8 662.4L166.2 658" fill="none" stroke="#6A6A6A" stroke-width="1.1"/><path d="M633.4 659.3L635.6 656.3L637.8 659.3Z" fill="#6A6A6A"/><path d="M630.2 660.9H641M630.2 664.1H641M630.2 667.3H635.8" stroke="#6A6A6A" stroke-width="1"/><path d="M691 656.3H703V664.7H700L696.4 667.9V664.7H691Z" fill="#7C7C7C"/><rect x="762.8" y="656" width="12.6" height="11.2" fill="none" stroke="#6A6A6A" stroke-width="1.1"/><path d="M765.5 656V667.2M765.5 663.7H775.4" fill="none" stroke="#6A6A6A" stroke-width="1.1"/><rect x="768.3" y="658.2" width="4.4" height="2.4" fill="none" stroke="#6A6A6A" stroke-width="0.9"/><rect x="800.5" y="655.5" width="4.6" height="4" fill="none" stroke="#6A6A6A" stroke-width="1"/><rect x="800.5" y="663.5" width="4.6" height="4" fill="none" stroke="#6A6A6A" stroke-width="1"/><rect x="809.5" y="655.5" width="4.6" height="4" fill="none" stroke="#6A6A6A" stroke-width="1"/><rect x="809.5" y="663.5" width="4.6" height="4" fill="none" stroke="#6A6A6A" stroke-width="1"/><path d="M844.6 656.6C843 655.6 840.6 655.6 838.7 656V665.4C840.6 665 843 665 844.6 666C846.2 665 848.6 665 850.4 665.4V656C848.6 655.6 846.2 655.6 844.6 656.6ZM844.6 656.6V667.4" fill="none" stroke="#6A6A6A" stroke-width="1"/><path d="M840 658.2H843.4M840 660.2H843.4M840 662.2H843.4M845.8 658.2H849.2M845.8 660.2H849.2M845.8 662.2H849.2" stroke="#6A6A6A" stroke-width="0.8"/><path d="M876.2 656.8H889" stroke="#6A6A6A" stroke-width="1.6"/><path d="M878.2 657.4V662.6H887V657.4M880.4 659.4H885M882.6 662.6V667M880 667.3H885.3" fill="none" stroke="#6A6A6A" stroke-width="1"/><path d="M906.6 661.8H913.2" stroke="#5A5A5A" stroke-width="1.8"/><path d="M917 661.9H1016.8" stroke="#8E8E8E" stroke-width="1"/><path d="M967.3 659V664.4" stroke="#8E8E8E" stroke-width="1"/><rect x="944" y="655.8" width="4" height="11.2" fill="#5A5A5A"/><path d="M1021.2 661.8H1028.8M1025 658V665.6" stroke="#5A5A5A" stroke-width="1.8"/><rect x="1083.7" y="656.8" width="11.6" height="11.6" fill="none" stroke="#6A6A6A" stroke-width="1.1"/><path d="M1089.5 657.4V660.4M1088.3 658.9H1090.7M1089.5 667.8V664.8M1088.3 666.3H1090.7M1084.3 662.6H1087.3M1085.8 661.4V663.8M1094.7 662.6H1091.7M1093.2 661.4V663.8" stroke="#6A6A6A" stroke-width="0.9" fill="none"/></g>
<text x="520.5" y="19.6" font-size="12" fill="#FFFFFF">演示文稿</text>
<text x="569.4" y="19.6" font-size="12" fill="#FFFFFF" textLength="112.4" lengthAdjust="spacingAndGlyphs">1.pptx - PowerPoint</text>
<text x="860" y="19.6" font-size="12" fill="#F3CDBF">绘图工具</text>
<text x="13" y="48" font-size="12" fill="#FFFFFF">文件</text>
<text x="72" y="48" font-size="12" fill="#B7472A">开始</text>
<text x="125.5" y="48" font-size="12" fill="#FFFFFF" textLength="30" lengthAdjust="spacingAndGlyphs">iSlide</text>
<text x="185" y="48" font-size="12" fill="#FFFFFF">插入</text>
<text x="238" y="48" font-size="12" fill="#FFFFFF">设计</text>
<text x="291.5" y="48" font-size="12" fill="#FFFFFF">切换</text>
<text x="344" y="48" font-size="12" fill="#FFFFFF">动画</text>
<text x="402" y="48" font-size="12" fill="#FFFFFF">口袋动画</text>
<text x="454" y="48" font-size="12" fill="#FFFFFF" textLength="13.5" lengthAdjust="spacingAndGlyphs">PA</text>
<text x="497" y="48" font-size="12" fill="#FFFFFF">幻灯片放映</text>
<text x="587" y="48" font-size="12" fill="#FFFFFF">审阅</text>
<text x="639" y="48" font-size="12" fill="#FFFFFF">视图</text>
<text x="692" y="48" font-size="12" fill="#FFFFFF" textLength="68.5" lengthAdjust="spacingAndGlyphs">OneKey Lite</text>
<text x="790.5" y="48" font-size="12" fill="#FFFFFF">百度网盘</text>
<text x="871" y="48" font-size="12" fill="#FFFFFF">格式</text>
<text x="946.5" y="48" font-size="12" fill="#FFFFFF">告诉我</text>
<text x="983" y="48" font-size="12" fill="#FFFFFF" textLength="7.5" lengthAdjust="spacingAndGlyphs">...</text>
<text x="1006" y="48" font-size="12" fill="#FFFFFF">登录</text>
<text x="1066" y="48" font-size="12" fill="#FFFFFF">共享</text>
<text x="9" y="109" font-size="12" fill="#444444">粘贴</text>
<text x="100" y="109" font-size="12" fill="#444444">在线</text>
<text x="88" y="124" font-size="12" fill="#444444">幻灯片</text>
<text x="152" y="109" font-size="12" fill="#444444">新加</text>
<text x="140.3" y="124" font-size="12" fill="#444444">动画页</text>
<text x="211.6" y="109" font-size="12" fill="#444444">新建</text>
<text x="201" y="124" font-size="12" fill="#444444">幻灯片</text>
<text x="271" y="76" font-size="12" fill="#444444">版式</text>
<text x="271" y="99" font-size="12" fill="#444444">重置</text>
<text x="271" y="121.5" font-size="12" fill="#444444">节</text>
<text x="751" y="109" font-size="12" fill="#444444">形状</text>
<text x="793" y="109" font-size="12" fill="#444444">排列</text>
<text x="828.6" y="109" font-size="12" fill="#444444">快速样式</text>
<text x="945.3" y="76.5" font-size="12" fill="#444444">查找</text>
<text x="945.3" y="99.4" font-size="12" fill="#444444">替换</text>
<text x="945.3" y="121.7" font-size="12" fill="#444444">选择</text>
<text x="1006.4" y="109" font-size="12" fill="#444444">保存到</text>
<text x="1000.5" y="124" font-size="12" fill="#444444">百度网盘</text>
<text x="12.2" y="145" font-size="12" fill="#666666">剪贴板</text>
<text x="108" y="145" font-size="12" fill="#666666">在线幻灯片</text>
<text x="237" y="145" font-size="12" fill="#666666">幻灯片</text>
<text x="409" y="145" font-size="12" fill="#666666">字体</text>
<text x="620" y="145" font-size="12" fill="#666666">段落</text>
<text x="808" y="145" font-size="12" fill="#666666">绘图</text>
<text x="944.4" y="145" font-size="12" fill="#666666">编辑</text>
<text x="1012.4" y="145" font-size="12" fill="#666666">保存</text>
<text x="417.5" y="84.3" font-size="12.2" fill="#444444">56</text>
<text x="52" y="167.8" font-size="12.3" fill="#333333">演示文稿</text>
<text x="102" y="167.3" font-size="12.5" fill="#333333" textLength="37" lengthAdjust="spacingAndGlyphs">1.pptx</text>
<text x="1041.4" y="167.4" font-size="11.9" fill="#444444">多窗口模式</text>
<text x="185.6" y="639.3" font-size="14.6" fill="#444444">单击此处添加备注</text>
<text x="4.5" y="666.3" font-size="12" fill="#505050">幻灯片</text>
<text x="44.5" y="666.3" font-size="12" fill="#505050">第</text>
<text x="60.5" y="666.3" font-size="12.5" fill="#505050">3</text>
<text x="72" y="666.3" font-size="12" fill="#505050">张</text>
<text x="86.8" y="666.2" font-size="12.5" fill="#505050">,</text>
<text x="94.5" y="666.3" font-size="12" fill="#505050">共</text>
<text x="110.5" y="666.3" font-size="12.5" fill="#505050">4</text>
<text x="122" y="666.3" font-size="12" fill="#505050">张</text>
<text x="185.6" y="666.3" font-size="12" fill="#505050">中文</text>
<text x="210" y="666.1" font-size="12" fill="#505050">(</text>
<text x="214" y="666.3" font-size="12" fill="#505050">中国</text>
<text x="237.5" y="666.1" font-size="12" fill="#505050">)</text>
<text x="646" y="666.3" font-size="12" fill="#505050">备注</text>
<text x="707.2" y="666.3" font-size="12" fill="#505050">批注</text>
<text x="1045" y="666.5" font-size="12.5" fill="#505050" textLength="24.5" lengthAdjust="spacingAndGlyphs">60%</text>
<text x="9.5" y="204.8" font-size="14.5" fill="#444444">1</text>
<text x="9.3" y="294.8" font-size="14.5" fill="#444444">2</text>
<text x="9.6" y="384.8" font-size="14.5" fill="#C9462C">3</text>
<text x="9" y="474.8" font-size="14.5" fill="#444444">4</text>
</svg>
</div>
</body></html>
